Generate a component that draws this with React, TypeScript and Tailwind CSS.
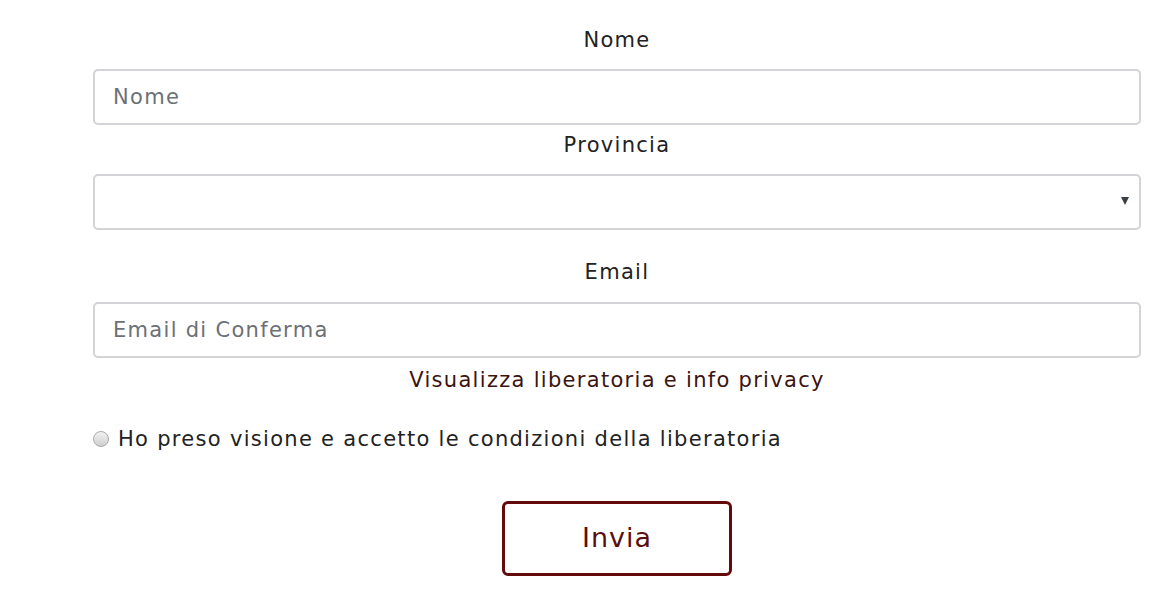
export default function App() {
  return (
    <div className="min-h-[594px] bg-white font-['DejaVu_Sans',sans-serif] text-[#222] tracking-[1.3px]">
      <form className="ml-[93px] flex w-[1048px] flex-col pt-[23px]">
        <label className="h-[30px] pt-[2px] text-center text-[21px] leading-[30px]">Nome</label>
        <input
          placeholder="Nome"
          className="mt-4 h-[56px] rounded-[5px] border-2 border-[#d3d3d8] px-[18px] text-[21px] tracking-[1.3px] placeholder:text-[#6c7077] outline-none"
        />
        <label className="mt-[4px] h-[30px] pt-[1px] text-center text-[21px] leading-[30px]">Provincia</label>
        <div className="relative mt-[15px] h-[56px] rounded-[5px] border-2 border-[#d3d3d8]">
          <span className="absolute right-[10px] top-[21px] h-0 w-0 border-x-[4px] border-t-[8px] border-x-transparent border-t-[#3a3f45]" />
        </div>
        <label className="mt-[26px] h-[30px] pt-[1px] text-center text-[21px] leading-[30px]">Email</label>
        <input
          placeholder="Email di Conferma"
          className="mt-4 h-[56px] rounded-[5px] border-2 border-[#d3d3d8] px-[18px] text-[21px] tracking-[1.3px] placeholder:text-[#6c7077] outline-none"
        />
        <a href="#" className="mt-[6px] h-[30px] pt-[1px] text-center text-[21px] leading-[30px] text-[#3b1410]">
          Visualizza liberatoria e info privacy
        </a>
        <label className="mt-[29px] flex h-[30px] items-center gap-[9px] pt-[1px] text-[21px] leading-[30px]">
          <span className="h-[16px] w-[16px] rounded-full border border-[#a9a9a9] bg-gradient-to-b from-[#f2f2f2] to-[#cfcfcf]" />
          Ho preso visione e accetto le condizioni della liberatoria
        </label>
        <div className="mt-[48px] flex justify-center">
          <button
            type="button"
            className="h-[75px] w-[230px] rounded-[6px] border-[3px] border-[#650a0a] text-[27px] tracking-[1px] text-[#5a0e0e]"
          >
            Invia
          </button>
        </div>
      </form>
    </div>
  );
}
